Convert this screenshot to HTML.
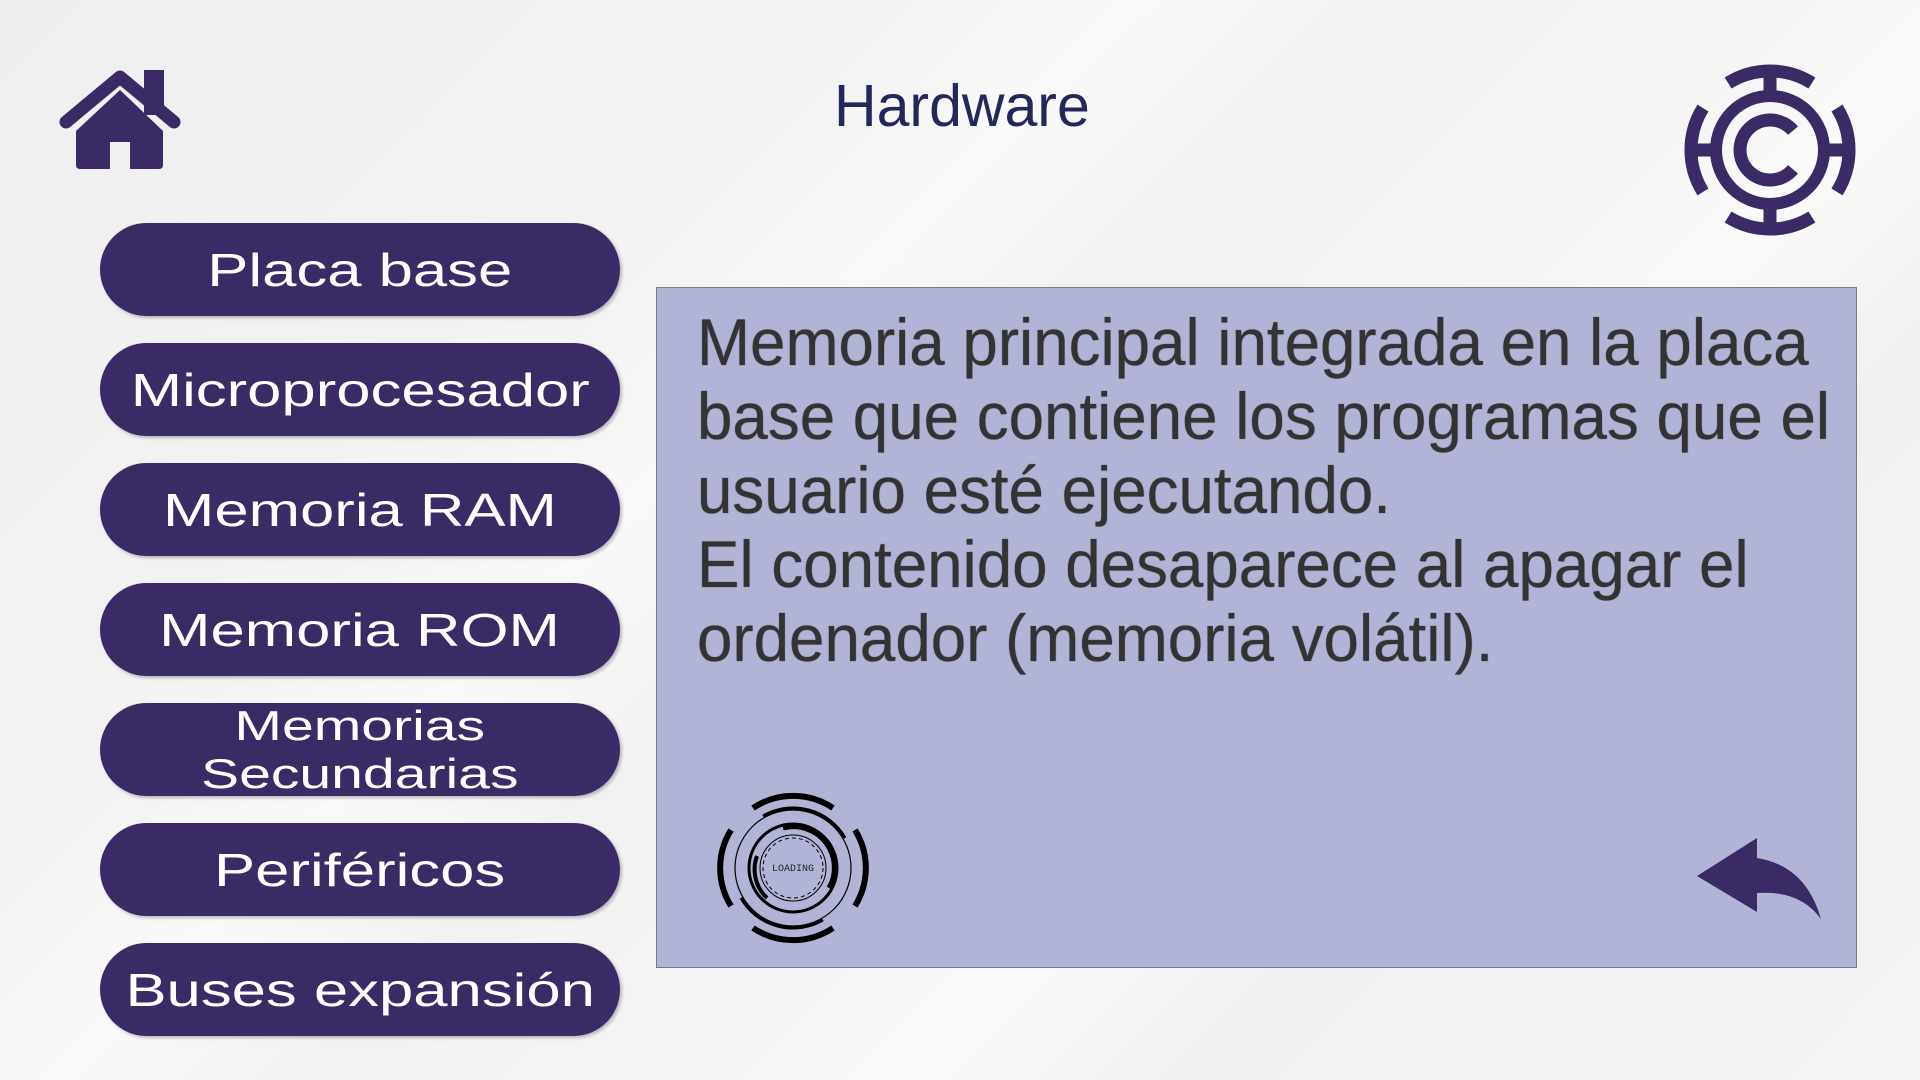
<!DOCTYPE html>
<html><head><meta charset="utf-8"><style>
html,body{margin:0;padding:0}
body{width:1920px;height:1080px;position:relative;overflow:hidden;font-family:"Liberation Sans",sans-serif;
background:linear-gradient(135deg,#efefef 0%,#f3f3f3 30%,#f9f9f9 38%,#f2f2f2 46%,#f5f5f5 60%,#fafafa 66%,#f1f1f1 75%,#f4f4f4 100%);}
.title{position:absolute;left:834px;top:71px;font-size:59px;color:#22285a;line-height:70px;}
.btn{position:absolute;left:100px;width:520px;height:93px;border-radius:47px;background:#3a2a66;color:#fff;
display:flex;align-items:center;justify-content:center;text-align:center;box-shadow:2px 2px 3px rgba(0,0,0,.25);}
.btn span{display:inline-block;font-size:46px;transform:scaleX(1.34);white-space:nowrap;line-height:1}
.btn span.two{font-size:42px;line-height:48px;transform:scaleX(1.36)}
.panel{position:absolute;left:656px;top:287px;width:1201px;height:681px;background:#b2b4d6;border:1px solid #7a7a8a;box-sizing:border-box}
.txt{position:absolute;left:697px;top:305px;font-size:66px;line-height:74px;color:#333;transform:scaleX(0.965);transform-origin:0 0;white-space:nowrap;text-shadow:0 0 1px #333}
</style></head><body>
<svg style="position:absolute;left:0;top:0" width="1920" height="1080">
<g fill="#3a2a66">
<rect x="144" y="70" width="20" height="45"/>
<polyline points="66,122 120,77 174,122" fill="none" stroke="#3a2a66" stroke-width="13" stroke-linecap="round" stroke-linejoin="round"/>
<path d="M76 131 L120 90 L163 131 L163 165 Q163 169 159 169 L130 169 L130 142 L110 142 L110 169 L80 169 Q76 169 76 165 Z"/>
</g>
<g transform="translate(1770,150)" fill="none" stroke="#3a2a66" stroke-width="13">
<path d="M-41.9 -67 A79 79 0 0 1 41.9 -67"/>
<path d="M-41.9 67 A79 79 0 0 0 41.9 67"/>
<path d="M-67 -41.9 A79 79 0 0 0 -67 41.9"/>
<path d="M67 -41.9 A79 79 0 0 1 67 41.9"/>
<circle r="54" stroke-width="12"/>
<path d="M0 -79 V-54 M0 79 V54 M-79 0 H-54 M79 0 H54"/>
<path d="M23 -19.3 A30 30 0 1 0 23 19.3"/>
</g>
</svg>
<div class="title">Hardware</div>
<div class="btn" style="top:223px"><span>Placa base</span></div>
<div class="btn" style="top:343px"><span>Microprocesador</span></div>
<div class="btn" style="top:463px"><span>Memoria RAM</span></div>
<div class="btn" style="top:583px"><span>Memoria ROM</span></div>
<div class="btn" style="top:703px"><span class="two">Memorias<br>Secundarias</span></div>
<div class="btn" style="top:823px"><span>Periféricos</span></div>
<div class="btn" style="top:943px"><span>Buses expansión</span></div>
<div class="panel"></div>
<div class="txt">Memoria principal integrada en la placa<br>base que contiene los programas que el<br>usuario esté ejecutando.<br>El contenido desaparece al apagar el<br>ordenador (memoria volátil).</div>
<svg style="position:absolute;left:0;top:0" width="1920" height="1080">
<g transform="translate(793,868)" fill="none" stroke="#000">
<path d="M-40 -60 A72 72 0 0 1 40 -60" stroke-width="6"/>
<path d="M-40 60 A72 72 0 0 0 40 60" stroke-width="6"/>
<path d="M-62 -38 A72 72 0 0 0 -62 38" stroke-width="6"/>
<path d="M62 -38 A72 72 0 0 1 62 38" stroke-width="6"/>
<circle r="58" stroke-width="1.2"/>
<path d="M-30 -52 A60 60 0 0 1 52 -30" stroke-width="3"/>
<path d="M30 52 A60 60 0 0 1 -52 30" stroke-width="3"/>
<circle r="44" stroke-width="3"/>
<path d="M-10 -40 A41 41 0 0 1 36 20" stroke-width="5"/>
<path d="M-36 -12 A39 39 0 0 0 -26 30" stroke-width="4"/>
<circle r="33" stroke-width="1"/>
<circle r="30" stroke-width="1" stroke-dasharray="4 3"/>
<text x="0" y="3" font-family="Liberation Mono,monospace" font-size="10" fill="#222" stroke="none" text-anchor="middle">LOADING</text>
</g>
<path d="M1697 876 L1757 838 L1757 858 Q1806 866 1821 919 Q1800 890 1757 893 L1757 912 Z" fill="#3a2a66"/>
</svg>
</body></html>
